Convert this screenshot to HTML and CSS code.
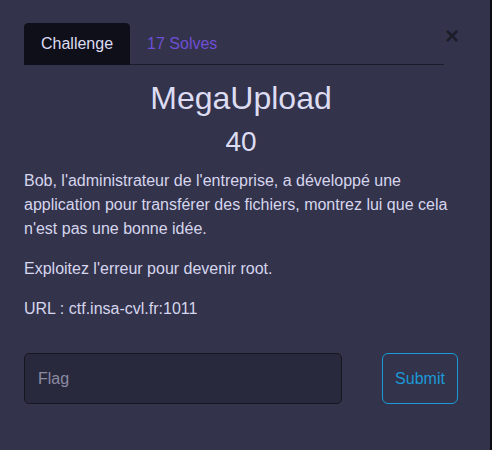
FILE: index.html
```html
<!DOCTYPE html>
<html lang="fr">
<head>
<meta charset="utf-8">
<title>MegaUpload</title>
<link rel="stylesheet" href="styles.css">
</head>
<body>
<div class="modal">
  <div class="modal-body">
    <div class="top-row">
      <ul class="nav-tabs">
        <li class="tab active">Challenge</li>
        <li class="tab">17 Solves</li>
      </ul>
      <button class="close" type="button" aria-label="Close">×</button>
    </div>
    <div class="tab-content">
      <h2 class="challenge-name">MegaUpload</h2>
      <h3 class="challenge-value">40</h3>
      <div class="description">
        <p>Bob, l'administrateur de l'entreprise, a développé une application pour transférer des fichiers, montrez lui que cela n'est pas une bonne idée.</p>
        <p>Exploitez l'erreur pour devenir root.</p>
        <p>URL : ctf.insa-cvl.fr:1011</p>
      </div>
      <form class="submit-row">
        <input class="flag-input" type="text" placeholder="Flag">
        <button class="submit-btn" type="button">Submit</button>
      </form>
    </div>
  </div>
</div>
</body>
</html>
```

FILE: styles.css
```css
html, body {
  margin: 0;
  padding: 0;
  background: #0b0b12;
  font-family: "Liberation Sans", Arial, sans-serif;
}

.modal {
  width: 490px;
  height: 450px;
  background: #33334b;
  color: #dcdcf3;
  box-sizing: border-box;
}

.modal-body {
  padding: 23px 0 0 24px;
}

.top-row {
  display: flex;
  align-items: flex-start;
}

.nav-tabs {
  list-style: none;
  margin: 0;
  padding: 0;
  display: flex;
  width: 420px;
  border-bottom: 1px solid #1b1b29;
}

.tab {
  padding: 8px 16px;
  border: 1px solid transparent;
  border-top-left-radius: 4px;
  border-top-right-radius: 4px;
  margin-bottom: -1px;
  font-size: 16px;
  line-height: 24px;
  color: #6f4fd6;
}

.tab.active {
  background: #0f0f1a;
  border-color: #0f0f1a;
  color: #dcdcf3;
}

.close {
  margin: 0 0 0 0;
  padding: 0;
  border: 0;
  background: transparent;
  font-family: "Liberation Sans", Arial, sans-serif;
  font-size: 24px;
  font-weight: 700;
  line-height: 24px;
  color: #1c1c2b;
  margin-left: 1px;
  margin-top: 1px;
  width: 14px;
}

.tab-content {
  padding-top: 14px;
  width: 434px;
}

.challenge-name {
  margin: 0 0 8px;
  font-size: 32px;
  font-weight: 400;
  line-height: 38.4px;
  text-align: center;
  color: #dcdcf3;
}

.challenge-value {
  margin: 0 0 10px;
  font-size: 28px;
  font-weight: 400;
  line-height: 33.6px;
  text-align: center;
  color: #dcdcf3;
}

.description p {
  margin: 0 0 16px;
  font-size: 16px;
  line-height: 24px;
  color: #d6d6ee;
}

.submit-row {
  display: flex;
  justify-content: space-between;
  margin-top: 32px;
}

.flag-input {
  width: 318px;
  height: 51px;
  box-sizing: border-box;
  background: #29293e;
  border: 1px solid #17171f;
  border-radius: 5px;
  padding: 0 13px;
  font-family: "Liberation Sans", Arial, sans-serif;
  font-size: 16px;
  color: #dcdcf3;
  outline: none;
}

.flag-input::placeholder {
  color: #8b8ba2;
}

.submit-btn {
  width: 76px;
  height: 51px;
  box-sizing: border-box;
  background: transparent;
  border: 1px solid #1c99d6;
  border-radius: 6px;
  font-family: "Liberation Sans", Arial, sans-serif;
  font-size: 16px;
  color: #1c99d6;
  padding: 0;
}
```
